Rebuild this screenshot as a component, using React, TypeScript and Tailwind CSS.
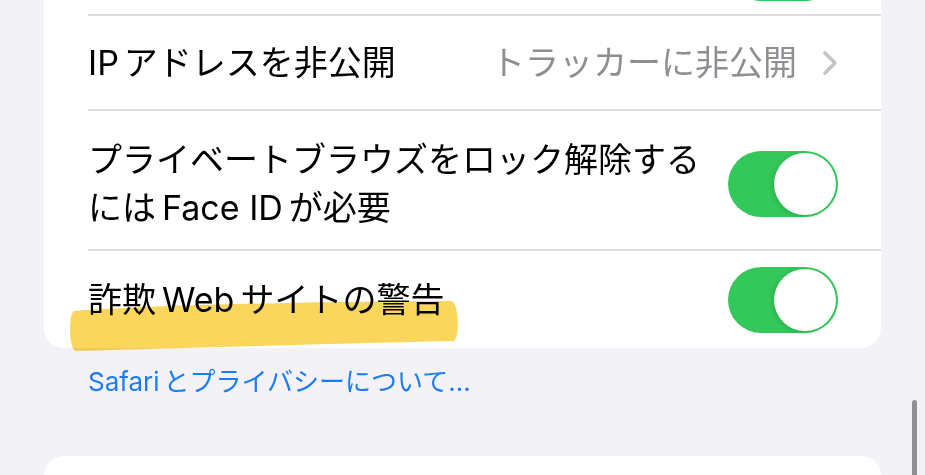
import React from "react";

function Toggle() {
  return (
    <div className="relative h-[66px] w-[110px] shrink-0 rounded-full bg-[#34c759]">
      <div className="absolute right-[2px] top-[2px] h-[62px] w-[62px] rounded-full bg-white shadow-[-2px_1px_4px_rgba(0,0,0,0.12)]" />
    </div>
  );
}

function Chevron() {
  return (
    <svg viewBox="0 0 16 26" className="h-[26px] w-[16px]" fill="none">
      <path d="M3 3l10 10-10 10" stroke="#c4c4c7" strokeWidth="3.6" strokeLinecap="round" strokeLinejoin="round" />
    </svg>
  );
}

export default function App() {
  return (
    <div className="relative h-[475px] w-full overflow-hidden bg-[#f2f2f7] font-['Inter','Noto_Sans_CJK_JP',sans-serif] text-black">
      <div className="relative mx-[44px] -mt-[79px] rounded-b-[20px] bg-white">
        <div className="ml-[44px]">
          {/* row above, mostly scrolled off */}
          <div className="flex h-[95px] items-center justify-end border-b-2 border-[#dedee2] pr-[43px]">
            <Toggle />
          </div>

          <div className="flex h-[95px] items-center justify-between border-b-2 border-[#dedee2] pr-[43px]">
            <span className="text-[34px] leading-[48px]">
              <span className="mr-[5px]">IP</span>アドレスを非公開
            </span>
            <div className="flex items-center gap-[25px]">
              <span className="text-[34px] leading-[48px] text-[#8e8e93]">トラッカーに非公開</span>
              <Chevron />
            </div>
          </div>

          <div className="flex h-[140px] items-center justify-between border-b-2 border-[#dedee2] pr-[43px] pt-[8px]">
            <span className="text-[34px] leading-[48px]">
              プライベートブラウズをロック解除する
              <br />
              には<span className="mx-[6px]">Face ID</span>が必要
            </span>
            <Toggle />
          </div>

          <div className="relative flex h-[97px] items-center justify-between pr-[43px]">
            <span className="text-[34px] leading-[48px]">
              詐欺<span className="mx-[6px]">Web</span>サイトの警告
            </span>
            <Toggle />
            <svg
              viewBox="0 0 392 56"
              className="pointer-events-none absolute left-[-20px] top-[48px] h-[56px] w-[392px] mix-blend-multiply"
            >
              <path
                d="M6 12 C 80 7, 200 3, 383 2 C 391 2, 392 38, 386 42 C 250 45, 120 49, 8 52 C 1 52, 0 15, 6 12 Z"
                fill="#fbd24e"
                opacity="0.92"
              />
            </svg>
          </div>
        </div>
      </div>

      <div className="mt-[18px] pl-[88px] text-[26px] leading-[32px] text-[#1c7cf2]">
        Safari<span className="ml-[4px]">とプライバシーについて…</span>
      </div>

      <div className="mx-[44px] mt-[58px] h-[60px] rounded-t-[20px] bg-white" />

      <div className="absolute right-[8px] top-[400px] h-[90px] w-[5px] rounded-full bg-[#8f8f94]" />
    </div>
  );
}
